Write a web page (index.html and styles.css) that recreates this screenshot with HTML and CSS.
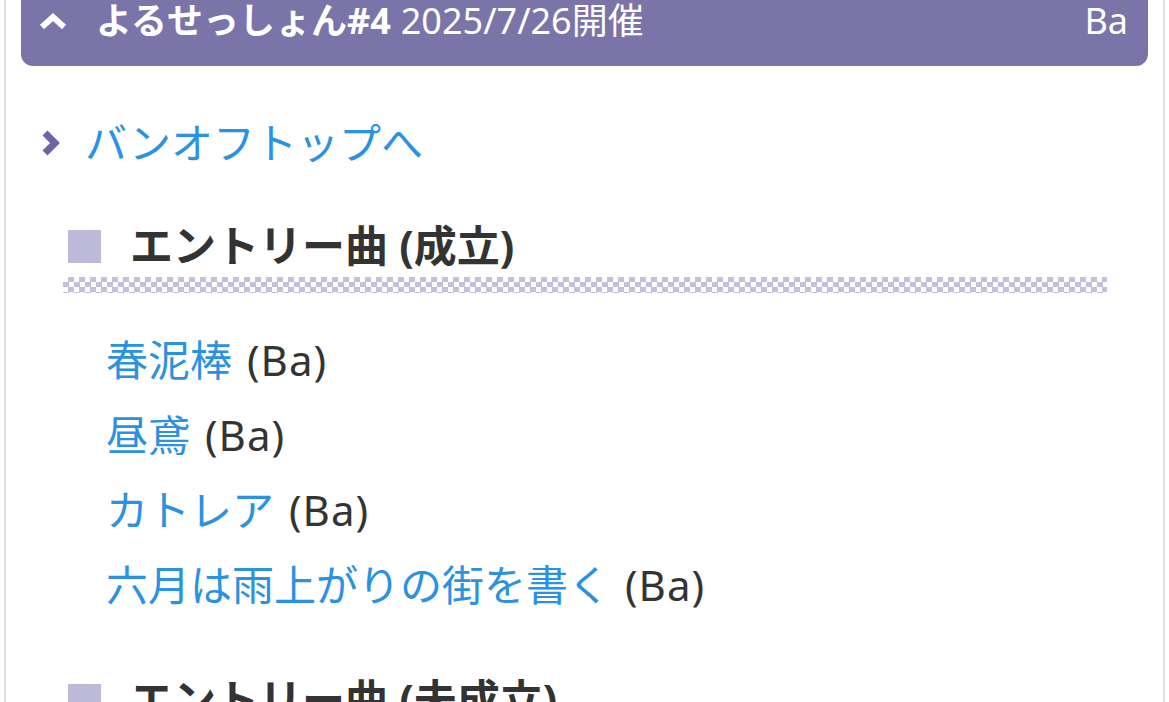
FILE: index.html
```html
<!DOCTYPE html>
<html lang="ja">
<head>
<meta charset="UTF-8">
<meta name="viewport" content="width=device-width, initial-scale=1.0">
<title>よるせっしょん#4</title>
<link rel="stylesheet" href="styles.css">
</head>
<body>

<div class="panel">

  <!-- 見出しバー -->
  <div class="session-head">
    <svg class="fold" width="30" height="18" viewBox="0 0 30 18">
      <polyline points="4,15 15,5 26,15" fill="none" stroke="#fff" stroke-width="6"/>
    </svg>
    <span class="session-name">よるせっしょん#4</span>
    <span class="session-date">2025/7/26開催</span>
    <span class="session-part">Ba</span>
  </div>

  <!-- トップへ戻る -->
  <div class="back">
    <svg class="arrow" width="18" height="26" viewBox="0 0 18 26">
      <polyline points="3,3 13,13 3,23" fill="none" stroke="#6b65a3" stroke-width="7"/>
    </svg>
    <a href="#">バンオフトップへ</a>
  </div>

  <h2 class="section-title"><span class="mark"></span>エントリー曲 (成立)</h2>
  <ul class="songs">
    <li><a href="#">春泥棒</a><span class="part">(Ba)</span></li>
    <li><a href="#">昼鳶</a><span class="part">(Ba)</span></li>
    <li><a href="#">カトレア</a><span class="part">(Ba)</span></li>
    <li><a href="#">六月は雨上がりの街を書く</a><span class="part">(Ba)</span></li>
  </ul>

  <h2 class="section-title"><span class="mark"></span>エントリー曲 (未成立)</h2>

</div>

</body>
</html>
```

FILE: styles.css
```css
body, html {
  margin: 0;
  padding: 0;
  height: 100%;
  overflow: hidden;
  background: #fff;
}

body {
  font-family: "Noto Sans", "Noto Sans CJK JP", sans-serif;
  color: #333;
}

a {
  color: #2b91e2;
  text-decoration: none;
}

.panel {
  margin-left: 4px;
  width: 1127px;
  border-left: 2px solid #e0e0e0;
  border-right: 2px solid #e0e0e0;
  padding: 0 15px;
  min-height: 100%;
}

.session-head {
  display: flex;
  align-items: center;
  background-color: #7a74a8;
  color: #fff;
  font-size: 36px;
  line-height: 40px;
  padding: 1px 20px 25px 17px;
  border-radius: 0 0 12px 12px;
}

.fold {
  margin-right: 28px;
  flex: none;
}

.session-name {
  font-weight: bold;
  margin-right: 10px;
}

.session-part {
  margin-left: auto;
}

.back {
  display: flex;
  align-items: center;
  margin-top: 47px;
  padding-left: 21px;
  font-size: 42px;
  line-height: 60px;
}

.arrow {
  margin-right: 25px;
  flex: none;
}

.section-title {
  position: relative;
  display: flex;
  align-items: center;
  margin: 48px 41px 0 42px;
  padding: 0 0 22px 5px;
  font-size: 43px;
  line-height: 50px;
  font-weight: bold;
}

/* 市松模様の下線 */
.section-title::after {
  content: "";
  position: absolute;
  left: 0;
  right: 0;
  bottom: 0;
  height: 16px;
  background: repeating-conic-gradient(#c3bfdd 0 25%, #fff 0 50%) 0 0 / 11px 10px;
}

.section-title + .songs {
  margin-top: 29px;
}

.songs + .section-title {
  margin-top: 53px;
}

.mark {
  width: 33px;
  height: 33px;
  background-color: #bdb9d8;
  margin-right: 29px;
  flex: none;
}

.songs {
  list-style: none;
  margin: 0;
  padding: 0 0 0 85px;
  font-size: 42px;
  line-height: 75px;
}

.part {
  margin-left: 15px;
  letter-spacing: 1px;
}
```
